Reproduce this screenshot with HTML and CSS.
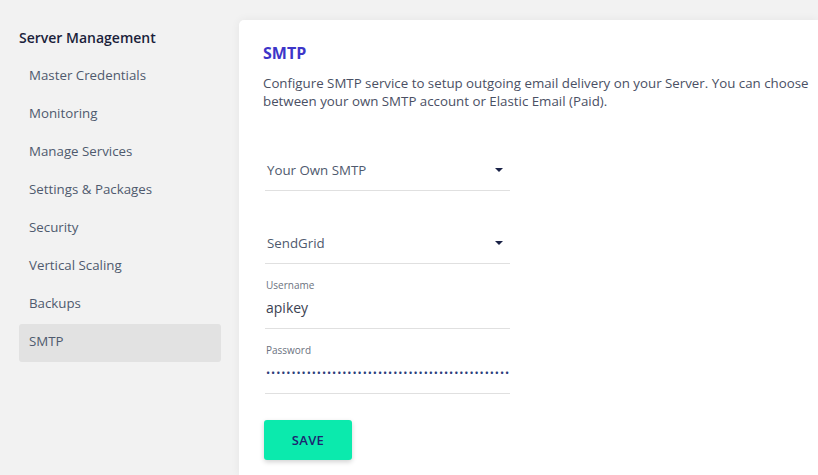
FILE: index.html
```html
<!DOCTYPE html>
<html>
<head>
<meta charset="utf-8">
<link rel="stylesheet" href="styles.css">
</head>
<body>
<div class="layout">
  <nav class="sidebar">
    <div class="side-title">Server Management</div>
    <a class="side-item">Master Credentials</a>
    <a class="side-item">Monitoring</a>
    <a class="side-item">Manage Services</a>
    <a class="side-item">Settings &amp; Packages</a>
    <a class="side-item">Security</a>
    <a class="side-item">Vertical Scaling</a>
    <a class="side-item">Backups</a>
    <a class="side-item active">SMTP</a>
  </nav>
  <main class="card">
    <h1 class="card-title">SMTP</h1>
    <p class="card-desc">Configure SMTP service to setup outgoing email delivery on your Server. You can choose<br>between your own SMTP account or Elastic Email (Paid).</p>
    <div class="form">
      <div class="select first">
        <span class="select-text">Your Own SMTP</span>
        <span class="caret"></span>
      </div>
      <div class="select second">
        <span class="select-text">SendGrid</span>
        <span class="caret"></span>
      </div>
      <div class="field">
        <div class="field-label">Username</div>
        <div class="field-value">apikey</div>
      </div>
      <div class="field">
        <div class="field-label">Password</div>
        <div class="field-value dots">••••••••••••••••••••••••••••••••••••••••••••••••</div>
      </div>
      <button class="save">SAVE</button>
    </div>
  </main>
</div>
</body>
</html>
```

FILE: styles.css
```css
* { box-sizing: border-box; }
html, body {
  margin: 0;
  padding: 0;
  background: #f2f2f2;
  font-family: "Open Sans", "Liberation Sans", sans-serif;
  overflow: hidden;
  height: 475px;
}
.layout {
  display: flex;
  gap: 18px;
  height: 475px;
}
.sidebar {
  width: 221px;
  flex: none;
  padding: 28px 0 0 19px;
  display: flex;
  flex-direction: column;
}
.side-title {
  font-size: 14px;
  font-weight: 600;
  color: #1b1f3b;
  line-height: 20px;
  margin-bottom: 10px;
}
.side-item {
  display: flex;
  align-items: center;
  height: 38px;
  padding: 0 0 4px 10px;
  font-size: 13.3px;
  color: #4f5a6e;
  border-radius: 3px;
}
.side-item.active {
  background: #e2e2e2;
}
.card {
  flex: 1;
  min-width: 0;
  margin-top: 20px;
  background: #ffffff;
  border-radius: 5px 0 0 0;
  box-shadow: 0 0 10px rgba(0, 0, 0, 0.06);
  padding: 23px 0 0 24px;
}
.card-title {
  margin: 0;
  font-size: 16px;
  line-height: 20px;
  font-weight: 700;
  color: #3d35c8;
}
.card-desc {
  margin: 11px 0 0 0;
  font-size: 13.3px;
  line-height: 18px;
  color: #4a5064;
  white-space: nowrap;
}
.form {
  margin-left: 2px;
  width: 245px;
  display: flex;
  flex-direction: column;
}
.select {
  height: 41px;
  display: flex;
  align-items: center;
  justify-content: space-between;
  border-bottom: 1px solid #e0e0e0;
  padding: 0 7px 1px 2px;
}
.select.first { margin-top: 40px; }
.select.second { margin-top: 32px; }
.select-text {
  font-size: 13.3px;
  color: #4f5a6e;
}
.caret {
  width: 0;
  height: 0;
  border-left: 4px solid transparent;
  border-right: 4px solid transparent;
  border-top: 4px solid #1a2247;
}
.field {
  padding: 14px 0 10px 0;
  border-bottom: 1px solid #e0e0e0;
}
.field-label {
  font-size: 10px;
  line-height: 14px;
  color: #6b7280;
  padding-left: 1px;
}
.field-value {
  margin-top: 6px;
  font-size: 14px;
  line-height: 20px;
  color: #3c4252;
  padding-left: 1px;
}
.field-value.dots {
  font-size: 11px;
  letter-spacing: 0.95px;
  color: #2b3d7a;
  white-space: nowrap;
  overflow: hidden;
  line-height: 20px;
}
.save {
  margin-top: 26px;
  width: 88px;
  height: 40px;
  border: none;
  border-radius: 3px;
  background: #0beaad;
  color: #1d2470;
  font-family: inherit;
  font-size: 13px;
  font-weight: 600;
  letter-spacing: 0.3px;
  box-shadow: 0 2px 5px rgba(0, 0, 0, 0.18);
  margin-left: -1px;
}
```
